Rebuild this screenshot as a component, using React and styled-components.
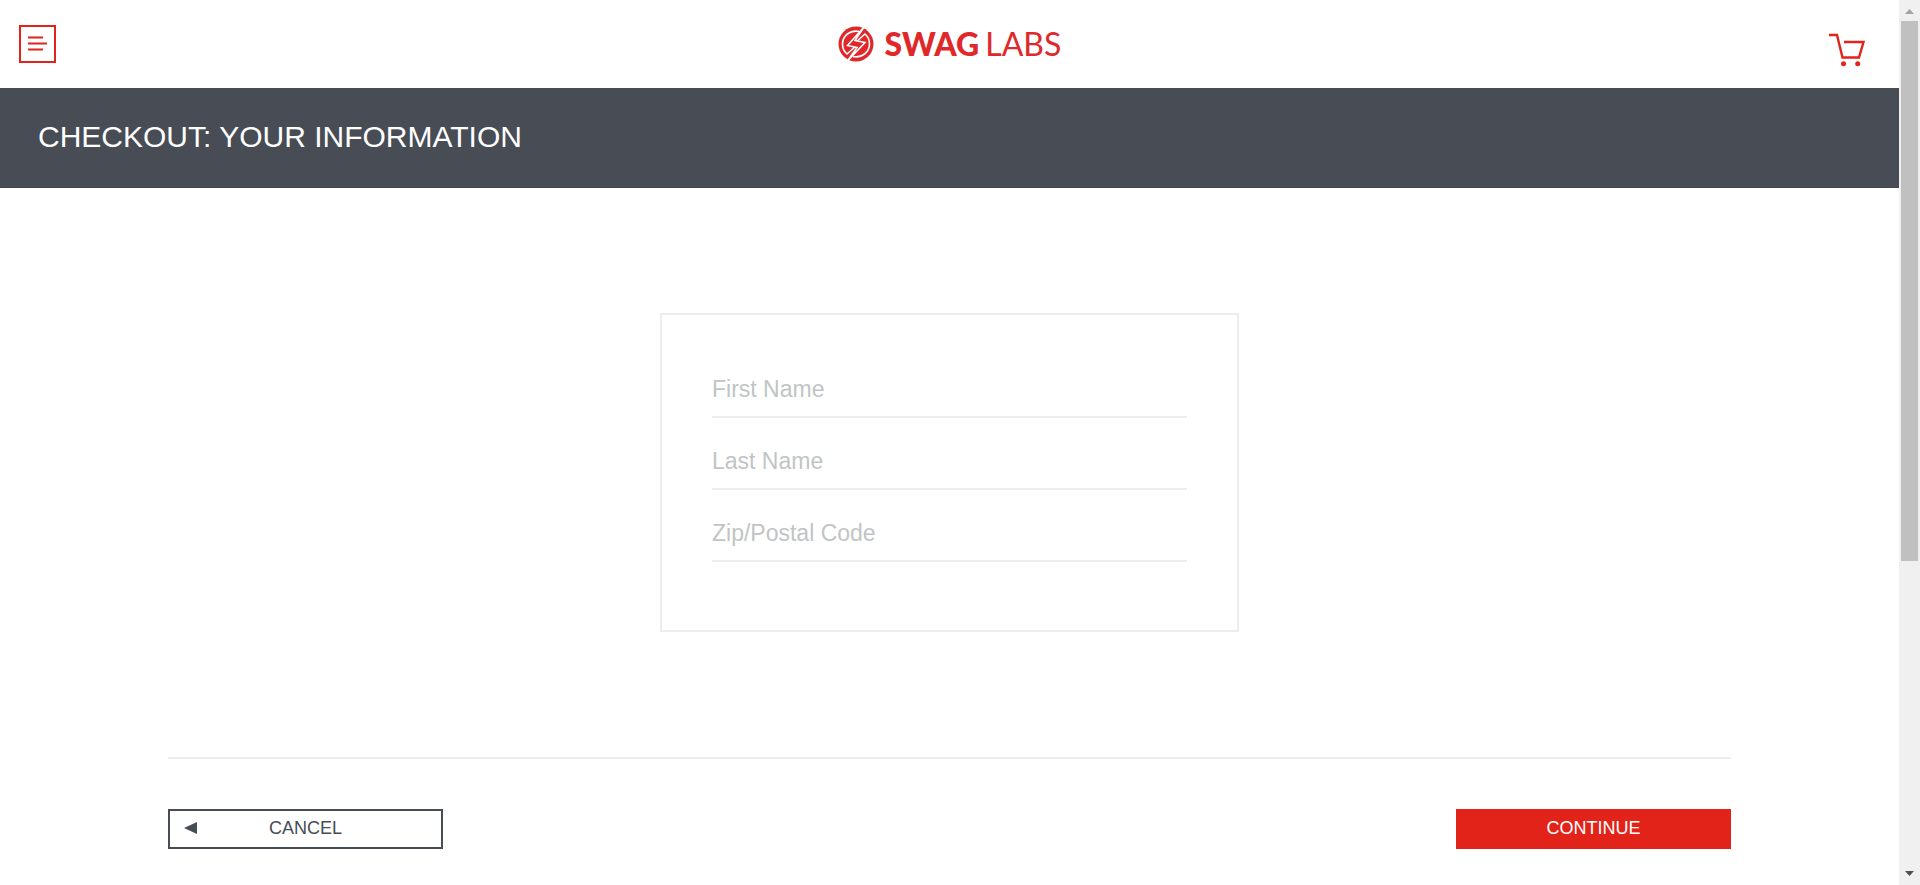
import React from "react";
import styled, { createGlobalStyle } from "styled-components";

const red = "#e2231a";
const slate = "#474c55";
const line = "#ededed";

const GlobalStyle = createGlobalStyle`
  *, *::before, *::after { box-sizing: border-box; }
  body {
    margin: 0;
    background: #fff;
    color: ${slate};
    font-family: Arial, "Liberation Sans", sans-serif;
  }
`;

const Shell = styled.div`
  display: flex;
  height: 100vh;
`;

const Page = styled.div`
  flex: 1;
  min-width: 0;
  overflow: hidden;
`;

const Header = styled.header`
  display: grid;
  grid-template-columns: 1fr auto 1fr;
  align-items: center;
  height: 88px;
  padding: 0 19px;
`;

const MenuButton = styled.button`
  display: flex;
  width: 37px;
  height: 38px;
  padding: 0;
  border: 2px solid ${red};
  background: #fff;
  cursor: pointer;
`;

const Brand = styled.a`
  display: flex;
  align-items: center;
  gap: 11px;
  color: #e0282a;
  text-decoration: none;
`;

const Wordmark = styled.span`
  font-family: Lato, sans-serif;
  font-size: 32px;
  font-weight: 400;
  line-height: 36px;
`;

const WordmarkStrong = styled.strong`
  font-weight: 900;
  margin-right: 6px;
`;

const CartLink = styled.a`
  display: flex;
  justify-self: end;
  padding: 12px 13px 0 0;
`;

const TitleBar = styled.div`
  display: flex;
  align-items: center;
  height: 100px;
  padding: 0 38px 2px;
  background: ${slate};
  border-bottom: 1px solid #474350;
`;

const Title = styled.h1`
  margin: 0;
  color: #fff;
  font-size: 30px;
  font-weight: 400;
  line-height: 36px;
`;

const Form = styled.form`
  padding: 125px 168px 0;
`;

const Card = styled.div`
  max-width: 579px;
  height: 319px;
  margin: 0 auto;
  padding: 48px 50px;
  border: 2px solid ${line};
`;

const Field = styled.input`
  display: block;
  width: 100%;
  height: 55px;
  margin-bottom: 17px;
  padding: 0;
  border: 0;
  border-bottom: 2px solid ${line};
  border-radius: 0;
  outline: 0;
  background: transparent;
  color: ${slate};
  font-family: inherit;
  font-size: 23px;

  &::placeholder {
    color: #bfc5c4;
    opacity: 1;
  }
`;

const Actions = styled.div`
  display: flex;
  justify-content: space-between;
  margin-top: 125px;
  padding-top: 50px;
  border-top: 2px solid ${line};
`;

const Button = styled.button`
  display: grid;
  grid-template-columns: 14px 1fr 14px;
  align-items: center;
  width: 275px;
  height: 40px;
  padding: 0 14px 2px;
  border: 2px solid ${(p) => (p.$primary ? red : slate)};
  background: ${(p) => (p.$primary ? red : "#fff")};
  color: ${(p) => (p.$primary ? "#fff" : slate)};
  font-family: inherit;
  font-size: 18px;
  line-height: 20px;
  cursor: pointer;
`;

const ButtonText = styled.span`
  grid-column: 2;
`;

const ScrollTrack = styled.div`
  display: flex;
  flex-direction: column;
  justify-content: space-between;
  width: 21px;
  padding: 9px 2px;
  background: #f0f0f0;
`;

const ScrollRun = styled.div`
  flex: 1;
  margin: 7px 0;
`;

const ScrollThumb = styled.div`
  width: 17px;
  height: 64%;
  background: #c0c0c0;
`;

const Arrow = styled.svg`
  display: block;
  margin: 0 auto;
`;

function BrandMark() {
  return (
    <svg width="36" height="36" viewBox="0 0 36 36" fill="none" aria-hidden="true">
      <circle cx="18" cy="18" r="17.5" fill="#e0282a" />
      <g stroke="#fff" strokeWidth="1.6">
        <path d="M21 5.5C12 3.5 4.5 10 4.5 18C4.5 22 6 25.5 9 28L18 20" />
        <path d="M15 30.5C24 32.5 31.5 26 31.5 18C31.5 14 30 10.5 27 8L18 16" />
        <path d="M26 1L9.5 19.5 19 21.500 9.5 35 27 16.500 17 14.500Z" fill="#e0282a" />
      </g>
    </svg>
  );
}

function MenuIcon() {
  return (
    <svg width="33" height="34" viewBox="0 0 33 34" stroke={red} strokeWidth="2" aria-hidden="true">
      <path d="M7 10.5h15M7 16.5h19M7 22.5h15" />
    </svg>
  );
}

function CartIcon() {
  return (
    <svg width="38" height="34" viewBox="0 0 38 34" fill="none" aria-hidden="true">
      <path d="M0 2h8l5.5 22.5H30L34.5 9H15" stroke={red} strokeWidth="2.4" />
      <circle cx="14.5" cy="30.7" r="2.5" fill={red} />
      <circle cx="28.7" cy="30.7" r="2.5" fill={red} />
    </svg>
  );
}

export default function App() {
  return (
    <>
      <GlobalStyle />
      <Shell>
        <Page>
          <Header>
            <MenuButton type="button" aria-label="Open menu">
              <MenuIcon />
            </MenuButton>
            <Brand href="#">
              <BrandMark />
              <Wordmark>
                <WordmarkStrong>SWAG</WordmarkStrong>LABS
              </Wordmark>
            </Brand>
            <CartLink href="#cart" aria-label="Cart">
              <CartIcon />
            </CartLink>
          </Header>
          <TitleBar>
            <Title>CHECKOUT: YOUR INFORMATION</Title>
          </TitleBar>
          <Form onSubmit={(e) => e.preventDefault()}>
            <Card>
              <Field type="text" aria-label="First Name" placeholder="First Name" />
              <Field type="text" aria-label="Last Name" placeholder="Last Name" />
              <Field type="text" aria-label="Zip/Postal Code" placeholder="Zip/Postal Code" />
            </Card>
            <Actions>
              <Button type="button">
                <svg width="13" height="12" viewBox="0 0 13 12" fill="currentColor" aria-hidden="true">
                  <path d="M0 6L13 0v12z" />
                </svg>
                <ButtonText>CANCEL</ButtonText>
              </Button>
              <Button type="submit" $primary>
                <ButtonText>CONTINUE</ButtonText>
              </Button>
            </Actions>
          </Form>
        </Page>
        <ScrollTrack aria-hidden="true">
          <Arrow width="9" height="5" viewBox="0 0 9 5" fill="#a3a3a3">
            <path d="M0 5L4.5 0 9 5z" />
          </Arrow>
          <ScrollRun>
            <ScrollThumb />
          </ScrollRun>
          <Arrow width="9" height="5" viewBox="0 0 9 5" fill="#505050">
            <path d="M0 0h9L4.5 5z" />
          </Arrow>
        </ScrollTrack>
      </Shell>
    </>
  );
}
